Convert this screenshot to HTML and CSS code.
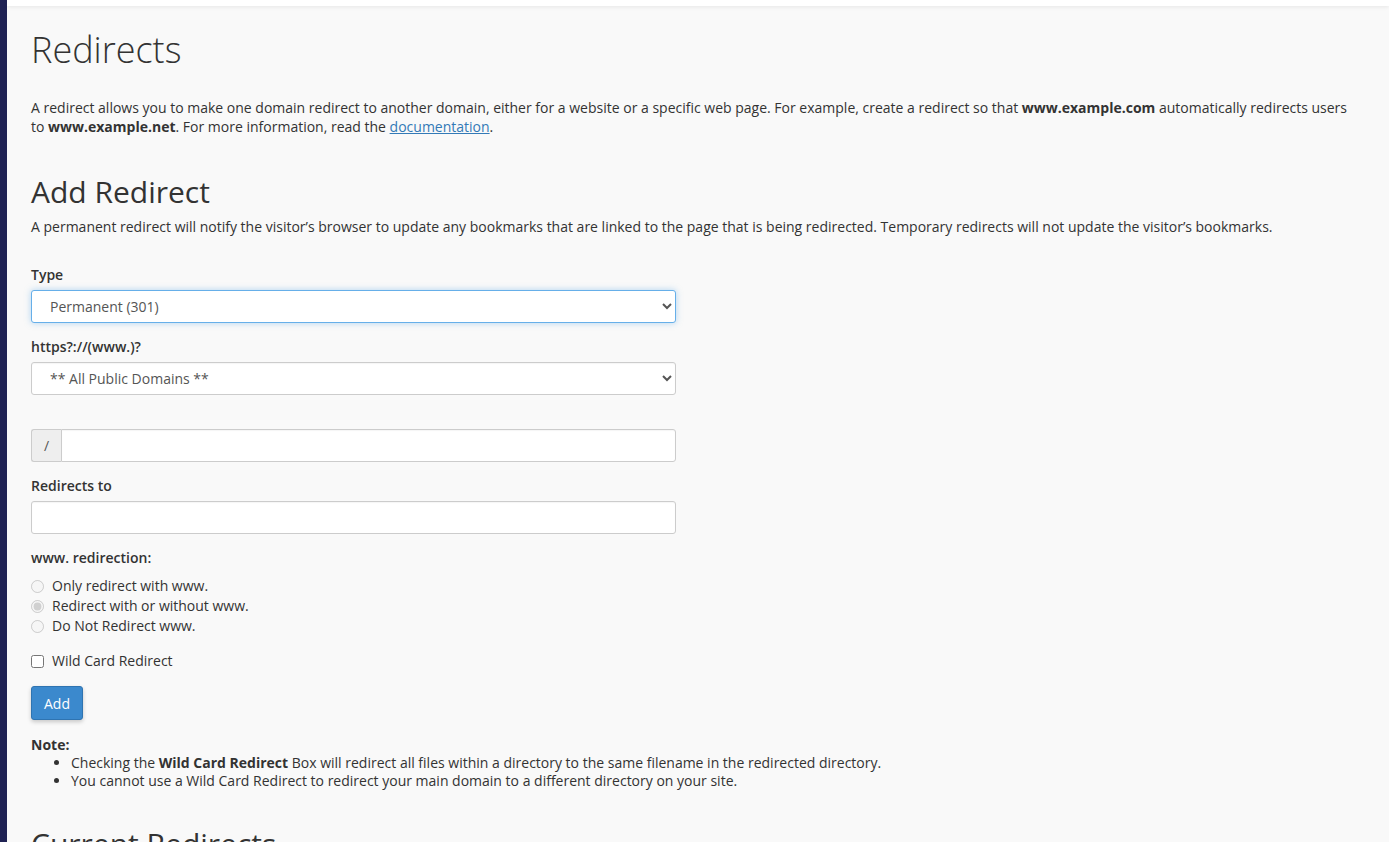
FILE: index.html
```html
<!DOCTYPE html>
<html lang="en">
<head>
<meta name="viewport" content="width=device-width, initial-scale=1.0">
<link rel="stylesheet" href="styles.css">
<title>Redirects</title>
</head>
<body>
  <div class="sidebar"></div>
  <div class="main">
    <div class="topbar"></div>
    <div class="content">
      <h1>Redirects</h1>
      <p class="intro">
        A redirect allows you to make one domain redirect to another domain, either for a website or a specific web page. For example, create a redirect so that <strong>www.example.com</strong> automatically redirects users to <strong>www.example.net</strong>. For more information, read the <a href="#">documentation</a>.
      </p>

      <h2>Add Redirect</h2>
      <p class="desc">A permanent redirect will notify the visitor’s browser to update any bookmarks that are linked to the page that is being redirected. Temporary redirects will not update the visitor’s bookmarks.</p>

      <form class="form">
        <div class="form-group">
          <label for="type">Type</label>
          <select id="type" class="form-control focused">
            <option>Permanent (301)</option>
            <option>Temporary (302)</option>
          </select>
        </div>

        <div class="form-group">
          <label for="domain">https?://(www.)?</label>
          <select id="domain" class="form-control">
            <option>** All Public Domains **</option>
          </select>
        </div>

        <div class="form-group spaced">
          <div class="input-group">
            <span class="addon">/</span>
            <input type="text" class="form-control">
          </div>
        </div>

        <div class="form-group">
          <label for="target">Redirects to</label>
          <input id="target" type="text" class="form-control">
        </div>

        <div class="form-group">
          <label>www. redirection:</label>
          <div class="radios">
            <label class="radio"><input type="radio" name="www" disabled> Only redirect with www.</label>
            <label class="radio"><input type="radio" name="www" checked disabled> Redirect with or without www.</label>
            <label class="radio"><input type="radio" name="www" disabled> Do Not Redirect www.</label>
          </div>
        </div>

        <label class="check"><input type="checkbox"> Wild Card Redirect</label>

        <button type="button" class="btn">Add</button>
      </form>

      <div class="note">
        <strong>Note:</strong>
        <ul>
          <li>Checking the <strong>Wild Card Redirect</strong> Box will redirect all files within a directory to the same filename in the redirected directory.</li>
          <li>You cannot use a Wild Card Redirect to redirect your main domain to a different directory on your site.</li>
        </ul>
      </div>

      <h2 class="current">Current Redirects</h2>
    </div>
  </div>
</body>
</html>
```

FILE: styles.css
```css
html, body {
  margin: 0;
  height: 100%;
}
body {
  font-family: "Open Sans", sans-serif;
  font-size: 14px;
  color: #333;
  background: #f9f9f9;
  display: flex;
  overflow: hidden;
}
.sidebar {
  width: 7px;
  flex: none;
  background: #1f2253;
}
.main {
  flex: 1;
}
.topbar {
  height: 6px;
  background: #fff;
  box-shadow: 0 1px 4px rgba(0,0,0,0.08);
}
.content {
  padding: 0 40px 0 24px;
}
h1 {
  font-weight: 300;
  font-size: 36px;
  margin: 20px 0 0;
  line-height: 48px;
}
.intro {
  margin: 24px 0 0;
  line-height: 19px;
}
a { color: #337ab7; }
h2 {
  font-weight: 400;
  font-size: 30px;
  margin: 36px 0 0;
  line-height: 40px;
}
.desc {
  margin: 6px 0 0;
  line-height: 18px;
}
.form {
  margin-top: 30px;
  width: 645px;
}
.form-group {
  margin-bottom: 15px;
}
.form-group.spaced {
  margin-top: 34px;
}
.form-group > label {
  display: block;
  font-weight: 600;
  margin-bottom: 6px;
  line-height: 18px;
}
.form-control {
  display: block;
  width: 100%;
  height: 33px;
  box-sizing: border-box;
  padding: 4px 12px;
  font-family: inherit;
  font-size: 14px;
  color: #555;
  background: #fff;
  border: 1px solid #ccc;
  border-radius: 3px;
  box-shadow: inset 0 1px 1px rgba(0,0,0,0.04);
}
select.form-control {
  padding-left: 14px;
}
.form-control.focused {
  border-color: #66afe9;
  box-shadow: 0 0 6px rgba(102,175,233,0.5);
}
.input-group {
  display: flex;
}
.addon {
  width: 30px;
  flex: none;
  box-sizing: border-box;
  background: #eee;
  border: 1px solid #ccc;
  border-right: 0;
  border-radius: 3px 0 0 3px;
  display: flex;
  align-items: center;
  justify-content: center;
  color: #555;
}
.input-group .form-control {
  border-radius: 0 3px 3px 0;
}
.radios {
  margin-top: 9px;
}
.radio, .check {
  display: flex;
  align-items: center;
  line-height: 20px;
  font-weight: 400;
}
.radio input, .check input {
  margin: 0 8px 0 0;
  width: 13px;
  height: 13px;
}
.btn {
  display: block;
  margin-top: 15px;
  width: 52px;
  height: 34px;
  font-family: inherit;
  font-size: 14px;
  color: #fff;
  background: #3b89cd;
  border: 1px solid #2f74b1;
  border-radius: 3px;
  box-shadow: 0 2px 4px rgba(0,0,0,0.2);
}
.note {
  margin-top: 16px;
  line-height: 18px;
}
.note ul {
  margin: 0;
  padding-left: 40px;
}
.current {
  margin-top: 34px;
}
```
